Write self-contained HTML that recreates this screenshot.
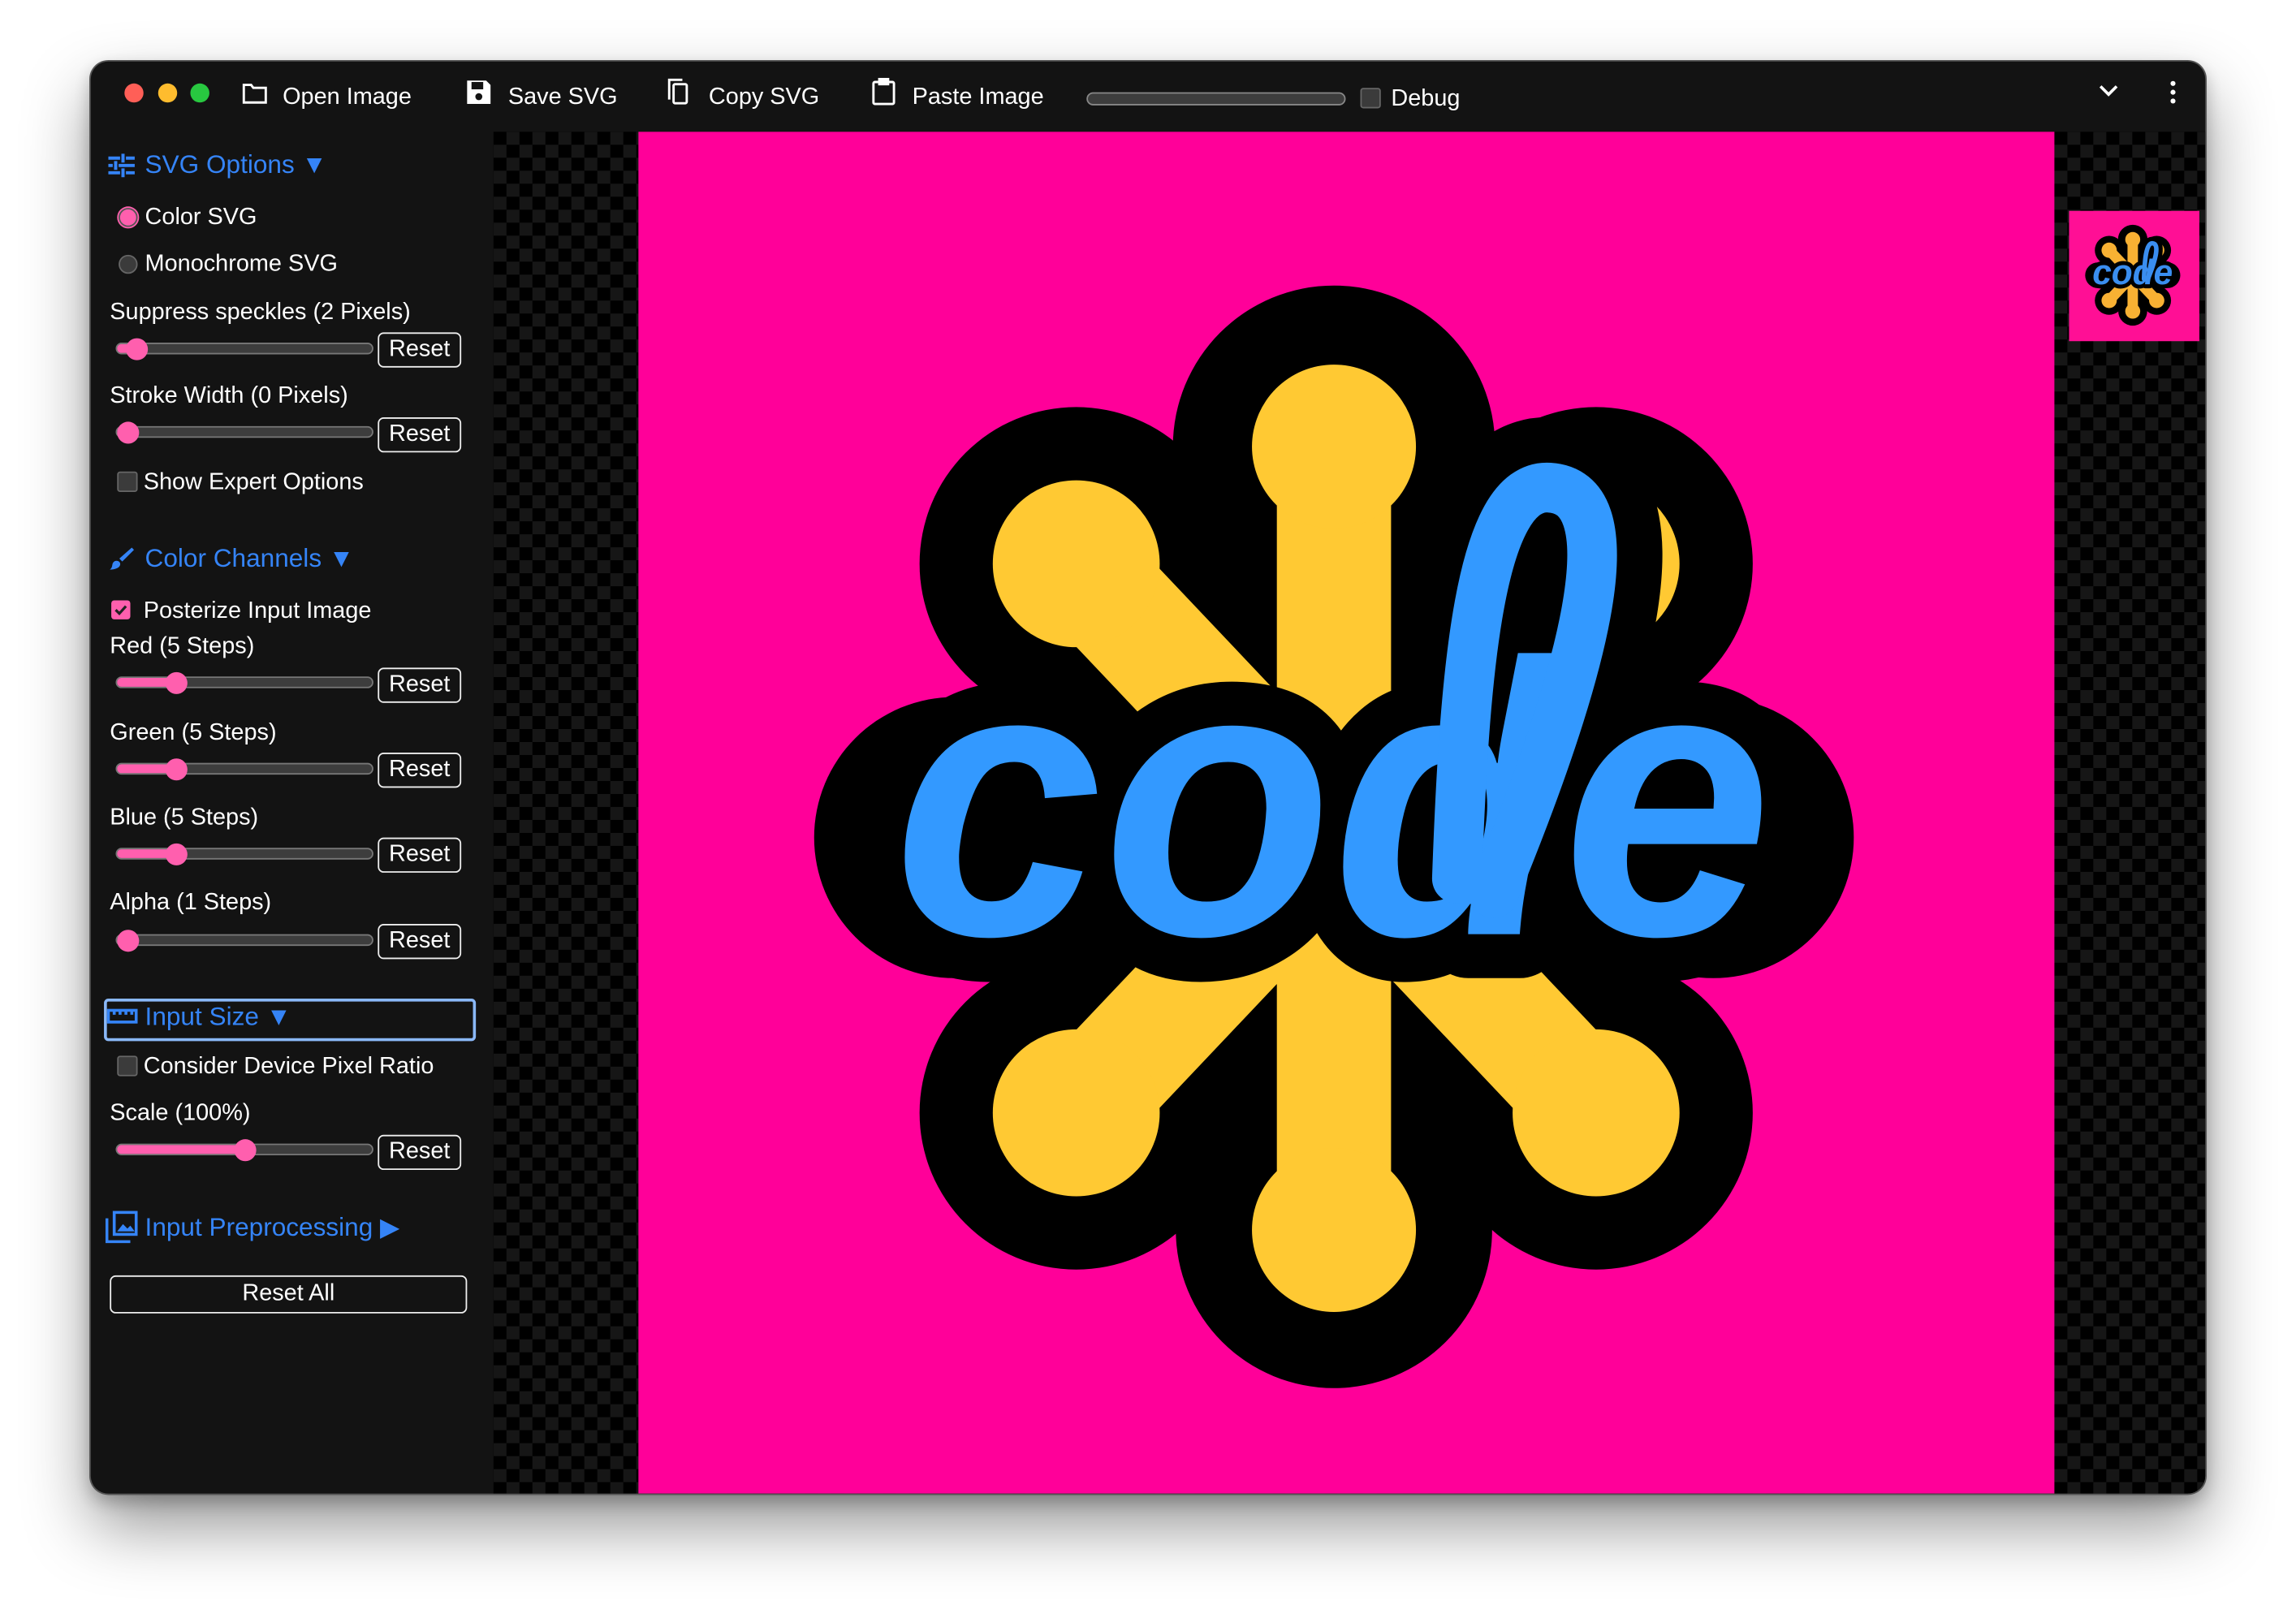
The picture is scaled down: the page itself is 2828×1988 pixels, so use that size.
<!DOCTYPE html>
<html><head><meta charset="utf-8"><style>
html,body{margin:0;padding:0;background:#fff;width:2828px;height:1988px;overflow:hidden}
#s{position:absolute;left:0;top:0;width:1568px;height:1102px;transform:scale(1.80357);transform-origin:0 0;font-family:"Liberation Sans",sans-serif;color:#fff}
.win{position:absolute;left:62px;top:42px;width:1444px;height:978px;background:#131313;border-radius:12px;box-shadow:0 0 0 1px #555,0 22px 45px rgba(0,0,0,.42),0 5px 12px rgba(0,0,0,.25);overflow:hidden}
.a{position:absolute;white-space:nowrap}
.t{font-size:16px;line-height:18px}
.h{font-size:17.5px;line-height:20px;color:#3584f7}
.dot{position:absolute;width:13px;height:13px;border-radius:50%;top:15px}
.trk{position:absolute;left:17px;width:174px;height:6px;background:#3d3d3d;border:1px solid #777;border-radius:5px}
.fill{position:absolute;left:0;top:0;height:6px;background:#ff5fae;border-radius:5px}
.th{position:absolute;width:15px;height:15px;border-radius:50%;background:#ff5fae;top:-4.5px}
.btn{position:absolute;left:196px;width:55px;height:22px;border:1px solid #eee;border-radius:4px;font-size:16px;line-height:22px;text-align:center}
.cb{position:absolute;width:12px;height:12px;background:#3b3b3b;border:1px solid #666;border-radius:2px}
.chk{position:absolute;left:275px;top:48px;width:1066px;height:930px;background-color:#000;background-image:repeating-conic-gradient(#161616 0 25%,#000 0 50%);background-size:17.74px 17.74px}
</style></head><body><div id="s">
<div class="win">
 <div class="dot" style="left:23px;background:#ff5f57"></div>
 <div class="dot" style="left:46px;background:#febc2e"></div>
 <div class="dot" style="left:68px;background:#28c840"></div>
 <svg class="a" style="left:103px;top:13px" width="18" height="18" viewBox="0 0 18 18" fill="none" stroke="#fff" stroke-width="1.6"><path d="M1.5 3h5l1.5 2h8.5v10h-15z"/></svg>
 <div class="a t" style="left:131px;top:16px">Open Image</div>
 <svg class="a" style="left:256px;top:12px" width="18" height="18" viewBox="0 0 18 18"><path d="M1 1h13l3 3v13H1z" fill="#fff"/><rect x="4" y="2" width="8" height="5" fill="#131313"/><circle cx="9" cy="12" r="2.4" fill="#131313"/></svg>
 <div class="a t" style="left:285px;top:16px">Save SVG</div>
 <svg class="a" style="left:392px;top:11px" width="18" height="20" viewBox="0 0 18 20" fill="none" stroke="#fff" stroke-width="1.6"><path d="M3 15V1.5h9"/><rect x="6" y="4.5" width="9" height="13" rx="1"/></svg>
 <div class="a t" style="left:422px;top:16px">Copy SVG</div>
 <svg class="a" style="left:533px;top:11px" width="18" height="20" viewBox="0 0 18 20" fill="none" stroke="#fff" stroke-width="1.6"><rect x="1.5" y="3" width="14" height="15" rx="1"/><rect x="5.5" y="1" width="6" height="3.5" fill="#fff"/></svg>
 <div class="a t" style="left:561px;top:16px">Paste Image</div>
 <div class="a" style="left:680px;top:21px;width:175px;height:7px;background:#3d3d3d;border:1px solid #888;border-radius:5px"></div>
 <div class="cb" style="left:867px;top:18px"></div>
 <div class="a t" style="left:888px;top:17px">Debug</div>
 <svg class="a" style="left:1371px;top:15px" width="14" height="10" viewBox="0 0 14 10" fill="none" stroke="#fff" stroke-width="2"><path d="M1.5 2l5.5 5.5 5.5-5.5"/></svg>
 <svg class="a" style="left:1418px;top:12px" width="8" height="18" viewBox="0 0 8 18" fill="#fff"><circle cx="4" cy="3" r="1.7"/><circle cx="4" cy="9" r="1.7"/><circle cx="4" cy="15" r="1.7"/></svg>

 <div class="chk"></div>
 <div class="chk" style="left:1341px;width:103px"></div>
 <div class="a" style="left:374px;top:48px;width:967px;height:930px;background:#ff0099"></div>
 <div class="a" style="left:1351px;top:102px;width:89px;height:89px;background:#ff0f95"></div>
</div>

<svg class="a" style="left:73px;top:104px" width="20" height="18" viewBox="0 0 20 18" stroke="#3584f7" stroke-width="2.2" fill="none"><path d="M1 4h8M13 4h6M11 1v6M1 9h3M8 9h11M6 6v6M1 14h8M13 14h6M11 11v6"/></svg>
<div class="a h" style="left:99px;top:102px">SVG Options ▼</div>
<div class="a" style="left:81px;top:142px;width:11px;height:11px;border-radius:50%;background:#ff5fae;border:1.5px solid #555;box-shadow:0 0 0 1px #ff5fae"></div>
<div class="a t" style="left:99px;top:140px">Color SVG</div>
<div class="a" style="left:81px;top:174px;width:11px;height:11px;border-radius:50%;background:#3b3b3b;border:1.5px solid #666"></div>
<div class="a t" style="left:99px;top:172px">Monochrome SVG</div>
<div class="a t" style="left:75px;top:205px">Suppress speckles (2 Pixels)</div>
<div class="a" style="left:62px;top:234px;width:260px;height:30px">
 <div class="trk" style="top:0"><div class="fill" style="width:14px"></div><div class="th" style="left:6px"></div></div>
 <div class="btn" style="top:-7px">Reset</div></div>
<div class="a t" style="left:75px;top:262px">Stroke Width (0 Pixels)</div>
<div class="a" style="left:62px;top:291px;width:260px;height:30px">
 <div class="trk" style="top:0"><div class="th" style="left:0"></div></div>
 <div class="btn" style="top:-6px">Reset</div></div>
<div class="cb" style="left:80px;top:322px"></div>
<div class="a t" style="left:98px;top:321px">Show Expert Options</div>

<svg class="a" style="left:73px;top:372px" width="20" height="20" viewBox="0 0 20 20" fill="#3584f7"><path d="M17 2l1.5 1.5-8 8-2-2z"/><path d="M6.5 11c2 0 3 1.5 2.5 3-.6 2-3.5 3-7 3 1.3-1 1.5-2 1.7-3.200.3-1.6 1.2-2.8 2.8-2.8z"/></svg>
<div class="a h" style="left:99px;top:371px">Color Channels ▼</div>
<div class="a" style="left:76px;top:410px;width:13px;height:13px;background:#ff5fae;border-radius:2px"></div>
<svg class="a" style="left:76px;top:410px" width="13" height="13" viewBox="0 0 13 13" fill="none" stroke="#222" stroke-width="1.8"><path d="M3 6.5l2.5 2.5 4.5-5"/></svg>
<div class="a t" style="left:98px;top:409px">Posterize Input Image</div>
<div class="a t" style="left:75px;top:433px">Red (5 Steps)</div>
<div class="a" style="left:62px;top:462px;width:260px;height:30px">
 <div class="trk" style="top:0"><div class="fill" style="width:42px"></div><div class="th" style="left:33px"></div></div>
 <div class="btn" style="top:-6px">Reset</div></div>
<div class="a t" style="left:75px;top:492px">Green (5 Steps)</div>
<div class="a" style="left:62px;top:521px;width:260px;height:30px">
 <div class="trk" style="top:0"><div class="fill" style="width:42px"></div><div class="th" style="left:33px"></div></div>
 <div class="btn" style="top:-7px">Reset</div></div>
<div class="a t" style="left:75px;top:550px">Blue (5 Steps)</div>
<div class="a" style="left:62px;top:579px;width:260px;height:30px">
 <div class="trk" style="top:0"><div class="fill" style="width:42px"></div><div class="th" style="left:33px"></div></div>
 <div class="btn" style="top:-7px">Reset</div></div>
<div class="a t" style="left:75px;top:608px">Alpha (1 Steps)</div>
<div class="a" style="left:62px;top:638px;width:260px;height:30px">
 <div class="trk" style="top:0"><div class="th" style="left:0"></div></div>
 <div class="btn" style="top:-7px">Reset</div></div>

<div class="a" style="left:71px;top:682px;width:250px;height:25px;border:2px solid #8ab8f8;border-radius:3px"></div>
<svg class="a" style="left:73px;top:687px" width="21" height="14" viewBox="0 0 21 14" fill="none" stroke="#3584f7" stroke-width="2"><rect x="1" y="3" width="19" height="8"/><path d="M5 3v3M9 3v3M13 3v3M17 3v3"/></svg>
<div class="a h" style="left:99px;top:684px">Input Size ▼</div>
<div class="cb" style="left:80px;top:721px"></div>
<div class="a t" style="left:98px;top:720px">Consider Device Pixel Ratio</div>
<div class="a t" style="left:75px;top:752px">Scale (100%)</div>
<div class="a" style="left:62px;top:781px;width:260px;height:30px">
 <div class="trk" style="top:0"><div class="fill" style="width:90px"></div><div class="th" style="left:80px"></div></div>
 <div class="btn" style="top:-6px">Reset</div></div>
<svg class="a" style="left:72px;top:827px" width="22" height="22" viewBox="0 0 22 22" fill="none" stroke="#3584f7" stroke-width="2"><rect x="6" y="1" width="15" height="15"/><path d="M1 5v16h16"/><path d="M8 14l4-5 3 3 2-2 3 4z" fill="#3584f7" stroke="none"/></svg>
<div class="a h" style="left:99px;top:828px">Input Preprocessing ▶</div>
<div class="a" style="left:75px;top:871px;width:242px;height:24px;border:1px solid #eee;border-radius:4px;font-size:16px;line-height:24px;text-align:center">Reset All</div>

<svg class="a" style="left:0;top:0" width="1568" height="1102" viewBox="0 0 1568 1102">
 <g>
 <g fill="#000">
  <circle cx="911" cy="305" r="110"/><circle cx="911" cy="840" r="108"/>
  <circle cx="735" cy="385" r="107"/><circle cx="1090" cy="385" r="107"/>
  <circle cx="735" cy="760" r="107"/><circle cx="1090" cy="760" r="107"/>
  <circle cx="911" cy="572" r="235"/>
  <circle cx="652" cy="572" r="96"/><circle cx="1170" cy="572" r="96"/>
  <rect x="640" y="470" width="540" height="205" rx="60"/>
 </g>
 <path d="M911 305V840M735 385L1090 760M1090 385L735 760" stroke="#ffc933" stroke-width="78"/>
 <g fill="#ffc933">
  <circle cx="911" cy="305" r="56"/><circle cx="911" cy="840" r="56"/>
  <circle cx="735" cy="385" r="57"/><circle cx="1090" cy="385" r="57"/>
  <circle cx="735" cy="760" r="57"/><circle cx="1090" cy="760" r="57"/>
 </g>
 <path d="M995 600 C1000 460 1010 330 1058 333 C1110 336 1090 440 1020 610" fill="none" stroke="#000" stroke-width="96" stroke-linecap="round"/>
 <text x="610" y="638" font-family="Liberation Sans" font-weight="bold" font-style="italic" font-size="265" textLength="600" lengthAdjust="spacingAndGlyphs" fill="#000" stroke="#000" stroke-width="60" stroke-linejoin="round">code</text>
 <text x="610" y="638" font-family="Liberation Sans" font-weight="bold" font-style="italic" font-size="265" textLength="600" lengthAdjust="spacingAndGlyphs" fill="#3399ff">code</text>
 <path d="M995 600 C1000 460 1010 330 1058 333 C1110 336 1090 440 1020 610" fill="none" stroke="#3399ff" stroke-width="34" stroke-linecap="round"/>
 </g>

 <g transform="translate(1456.5 188) scale(0.0915) translate(-911 -572)">
  <g fill="#000">
   <circle cx="911" cy="305" r="110"/><circle cx="911" cy="840" r="108"/>
   <circle cx="735" cy="385" r="107"/><circle cx="1090" cy="385" r="107"/>
   <circle cx="735" cy="760" r="107"/><circle cx="1090" cy="760" r="107"/>
   <circle cx="911" cy="572" r="235"/>
   <circle cx="652" cy="572" r="96"/><circle cx="1170" cy="572" r="96"/>
   <rect x="640" y="470" width="540" height="205" rx="60"/>
  </g>
  <path d="M911 305V840M735 385L1090 760M1090 385L735 760" stroke="#f8b133" stroke-width="78"/>
  <g fill="#f8b133">
   <circle cx="911" cy="305" r="56"/><circle cx="911" cy="840" r="56"/>
   <circle cx="735" cy="385" r="57"/><circle cx="1090" cy="385" r="57"/>
   <circle cx="735" cy="760" r="57"/><circle cx="1090" cy="760" r="57"/>
  </g>
  <path d="M995 600 C1000 460 1010 330 1058 333 C1110 336 1090 440 1020 610" fill="none" stroke="#000" stroke-width="96" stroke-linecap="round"/>
  <text x="610" y="638" font-family="Liberation Sans" font-weight="bold" font-style="italic" font-size="265" textLength="600" lengthAdjust="spacingAndGlyphs" fill="#000" stroke="#000" stroke-width="60" stroke-linejoin="round">code</text>
  <text x="610" y="638" font-family="Liberation Sans" font-weight="bold" font-style="italic" font-size="265" textLength="600" lengthAdjust="spacingAndGlyphs" fill="#3a8ef0">code</text>
  <path d="M995 600 C1000 460 1010 330 1058 333 C1110 336 1090 440 1020 610" fill="none" stroke="#3a8ef0" stroke-width="34" stroke-linecap="round"/>
 </g>
</svg>
</div></body></html>
